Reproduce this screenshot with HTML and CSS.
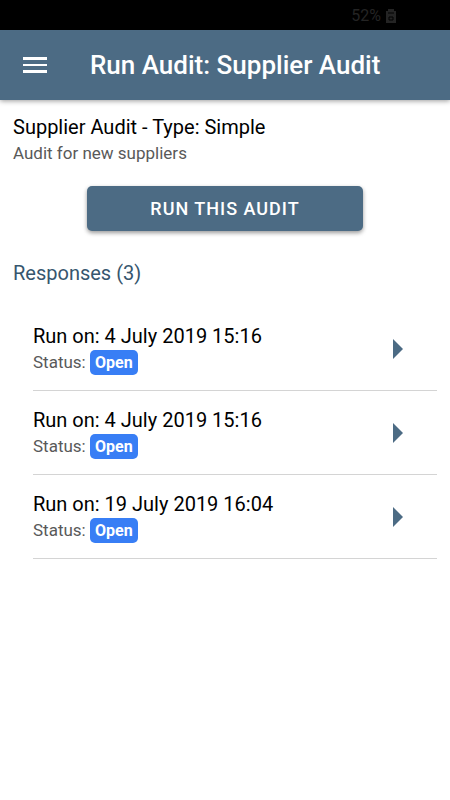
FILE: index.html
```html
<!DOCTYPE html>
<html lang="en">
  <head>
    <meta charset="UTF-8" />
    <meta name="viewport" content="width=device-width, initial-scale=1.0" />
    <title>Run Audit</title>
    <link rel="stylesheet" href="styles.css">
  </head>
  <body>
    <div class="statusbar">
      <span>52%</span>
      <svg class="battery" viewBox="0 0 12 16" aria-hidden="true">
        <path d="M3 1h6v2h2v12H1V3h2z" />
        <path class="battery-mark" d="M3 5h6M4 9h4v3H4z" />
      </svg>
    </div>
    <header class="toolbar">
      <button class="menu-btn" type="button" aria-label="Menu">
        <svg viewBox="0 0 24 16" aria-hidden="true">
          <path d="M0 0h24v3H0zM0 7h24v2H0zM0 13h24v3H0z" />
        </svg>
      </button>
      <h1 class="title">Run Audit: Supplier Audit</h1>
    </header>
    <main class="content">
      <h2 class="heading">Supplier Audit - Type: Simple</h2>
      <p class="note">Audit for new suppliers</p>
      <button class="run-btn" type="button">Run this audit</button>
      <h2 class="heading responses-heading">Responses (3)</h2>
      <ul class="responses">
        <li class="response">
          <div>
            <h3 class="heading">Run on: 4 July 2019 15:16</h3>
            <p class="note">Status: <span class="badge">Open</span></p>
          </div>
          <button class="open-btn" type="button" aria-label="Open response">
            <svg viewBox="0 0 10 20" aria-hidden="true"><path d="M0 0l10 10L0 20z" /></svg>
          </button>
        </li>
        <li class="response">
          <div>
            <h3 class="heading">Run on: 4 July 2019 15:16</h3>
            <p class="note">Status: <span class="badge">Open</span></p>
          </div>
          <button class="open-btn" type="button" aria-label="Open response">
            <svg viewBox="0 0 10 20" aria-hidden="true"><path d="M0 0l10 10L0 20z" /></svg>
          </button>
        </li>
        <li class="response">
          <div>
            <h3 class="heading">Run on: 19 July 2019 16:04</h3>
            <p class="note">Status: <span class="badge">Open</span></p>
          </div>
          <button class="open-btn" type="button" aria-label="Open response">
            <svg viewBox="0 0 10 20" aria-hidden="true"><path d="M0 0l10 10L0 20z" /></svg>
          </button>
        </li>
      </ul>
    </main>
  </body>
</html>
```
FILE: styles.css
```css
* {
  box-sizing: border-box;
  margin: 0;
  padding: 0;
}
body {
  background-color: #fff;
  color: #000;
  font-family: Roboto, "Liberation Sans", sans-serif;
}
button {
  border: 0;
  background: none;
  font-family: inherit;
  cursor: pointer;
}
svg {
  display: block;
}
.statusbar {
  display: flex;
  align-items: center;
  justify-content: flex-end;
  gap: 4px;
  height: 30px;
  padding: 2px 53px 0 0;
  background-color: #000;
  color: #242424;
  font-size: 16px;
  line-height: 20px;
}
.battery {
  width: 12px;
  height: 16px;
  fill: #242424;
}
.battery .battery-mark {
  fill: none;
  stroke: #000;
}
.toolbar {
  display: flex;
  align-items: center;
  gap: 32px;
  height: 70px;
  padding: 0 12px;
  background-color: #4c6b84;
  box-shadow: 0 1px 5px rgba(0, 0, 0, 0.4);
  color: #fff;
}
.menu-btn {
  padding: 12px 11px;
}
.menu-btn svg {
  width: 24px;
  height: 16px;
  fill: #fff;
}
.title {
  font-size: 26px;
  font-weight: 500;
  line-height: 30px;
}
.content {
  padding: 14px 13px;
}
.heading {
  font-size: 20px;
  font-weight: 400;
  line-height: 26px;
}
.note {
  color: #595959;
  font-size: 17px;
  line-height: 26px;
}
.run-btn {
  display: block;
  width: 65%;
  height: 45px;
  margin: 20px auto 29px;
  border-radius: 5px;
  background-color: #4c6b84;
  box-shadow: 0 2px 4px rgba(0, 0, 0, 0.4);
  color: #fff;
  font-size: 18px;
  font-weight: 500;
  letter-spacing: 1px;
  text-transform: uppercase;
}
.responses-heading {
  color: #36566e;
}
.responses {
  padding: 21px 0 0 20px;
  list-style: none;
}
.response {
  display: flex;
  align-items: center;
  justify-content: space-between;
  height: 84px;
  padding-right: 24px;
  border-bottom: 1px solid #d4d4d4;
}
.badge {
  display: inline-block;
  padding: 0 5px;
  border-radius: 5px;
  background-color: #387ef5;
  color: #fff;
  font-size: 16px;
  font-weight: 700;
  line-height: 25px;
}
.open-btn {
  padding: 10px;
}
.open-btn svg {
  width: 10px;
  height: 20px;
  fill: #4c6b84;
}
```
